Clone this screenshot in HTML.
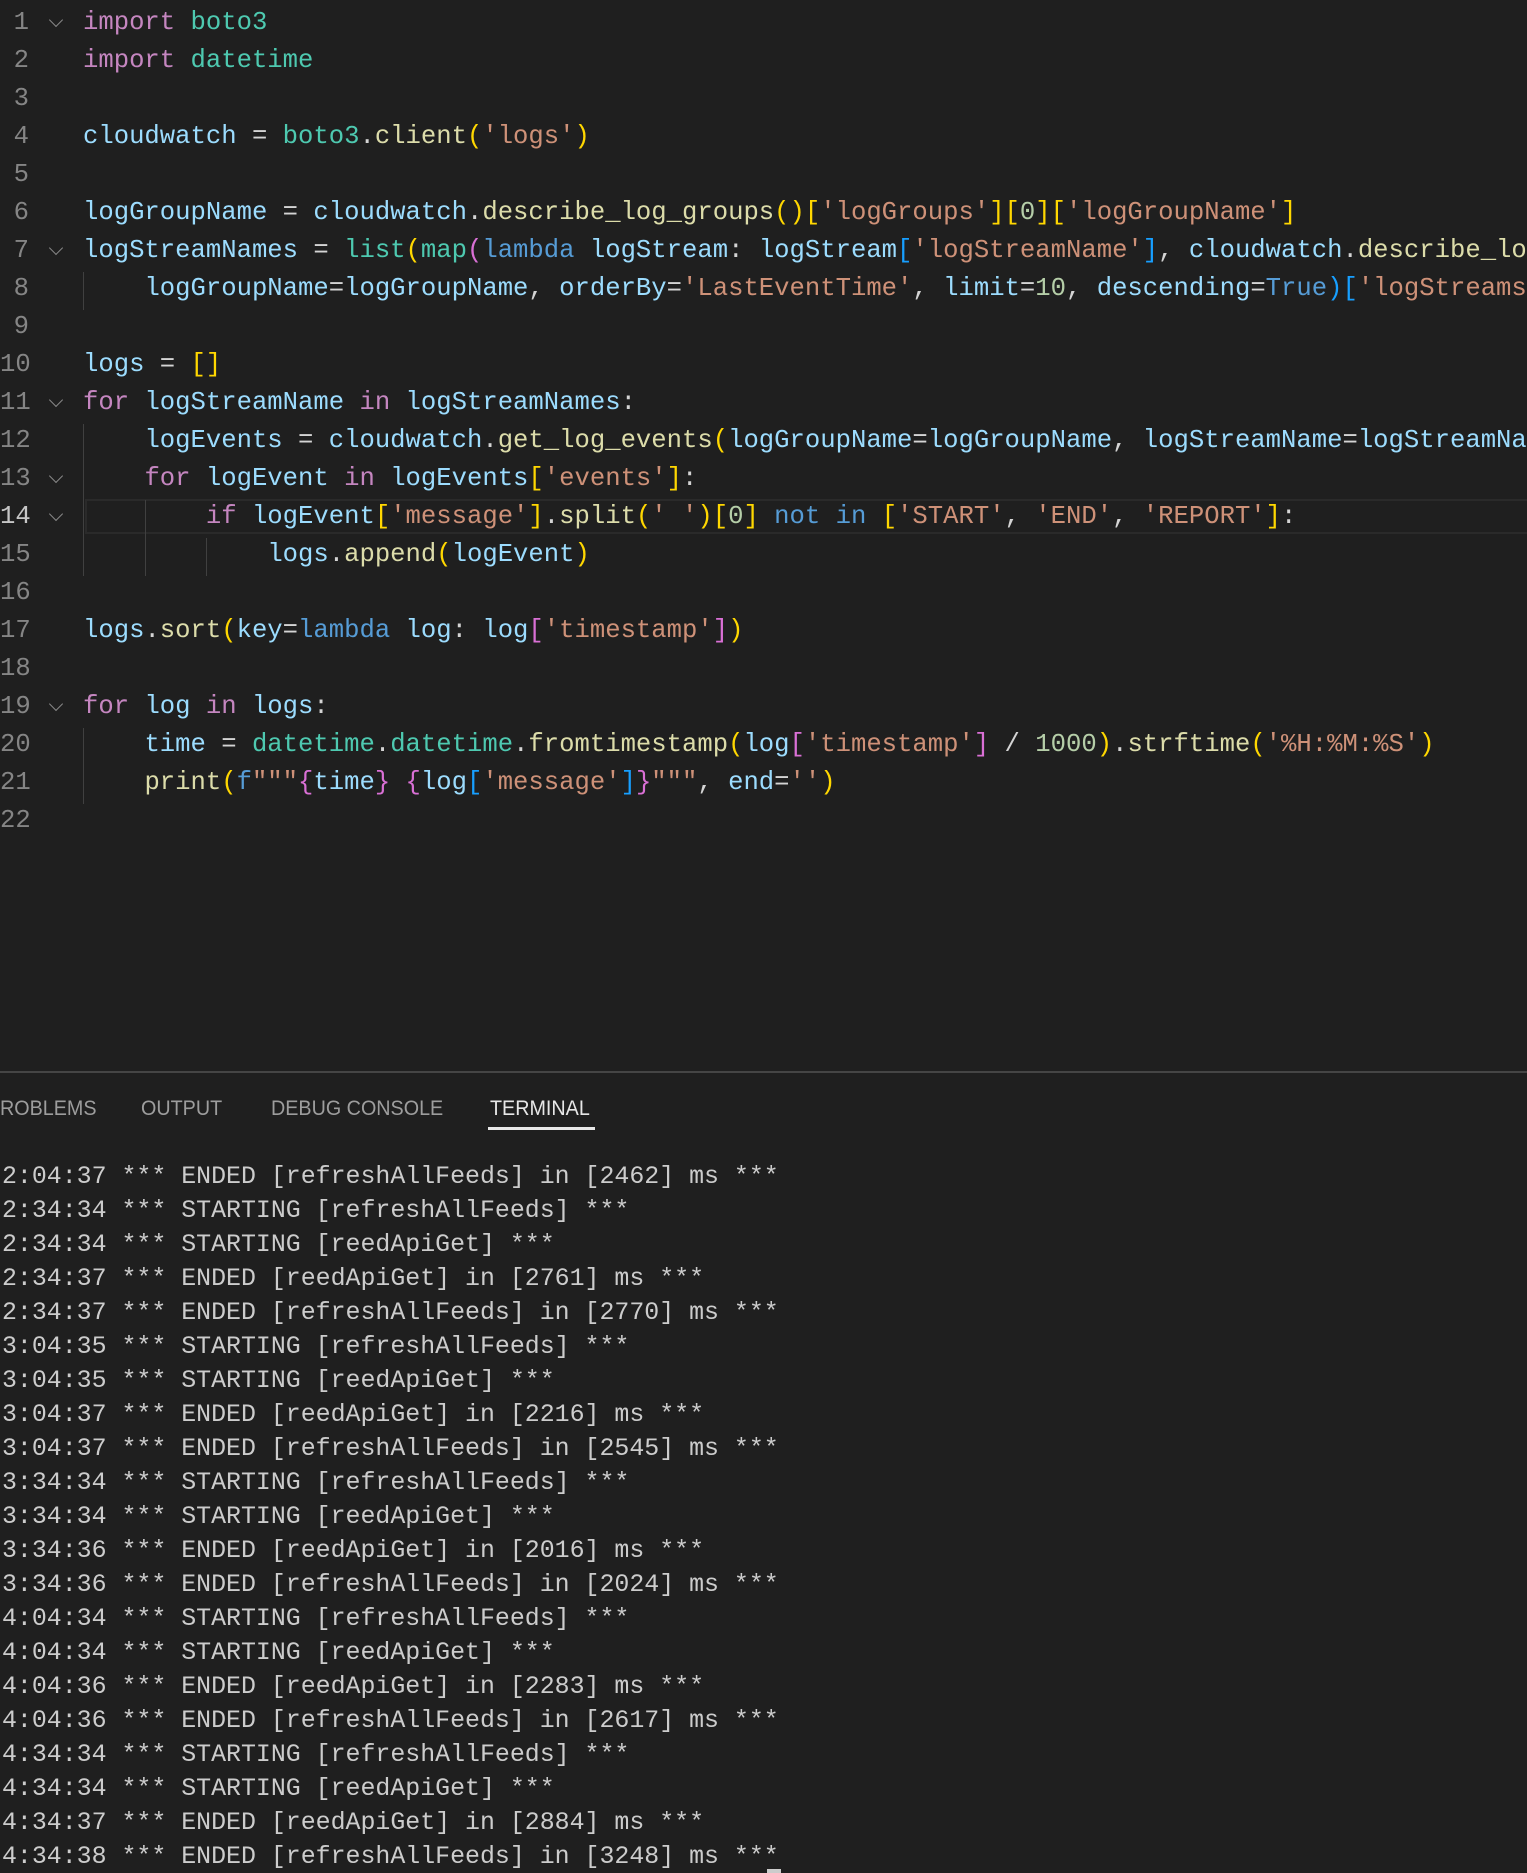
<!DOCTYPE html>
<html><head><meta charset="utf-8"><style>
html,body{margin:0;padding:0;background:#1f1f1f;width:1527px;height:1873px;overflow:hidden;position:relative}
#wrap{position:absolute;left:0;top:0;width:1527px;height:1873px;overflow:hidden}
.ln{position:absolute;left:0;width:29px;text-align:right;font:25.6px/38px "Liberation Mono",monospace;color:#858585;white-space:pre}
.c{position:absolute;left:83px;right:0;overflow:hidden;font:25.6px/38px "Liberation Mono",monospace;color:#d4d4d4;white-space:pre}
.t{position:absolute;left:2px;font:24.9px/34px "Liberation Mono",monospace;color:#cccccc;white-space:pre}
.k{color:#c586c0}.b{color:#569cd6}.m{color:#4ec9b0}.v{color:#9cdcfe}.f{color:#dcdcaa}.s{color:#ce9178}.n{color:#b5cea8}
.p1{color:#ffd700}.p2{color:#da70d6}.p3{color:#179fff}
.chev{position:absolute;left:51px;width:9px;height:9px;border-right:1.5px solid #888;border-bottom:1.5px solid #888;transform:rotate(45deg)}
.g{position:absolute;width:1px;background:#404040}
.tab{position:absolute;top:1095px;font:21px/28px "Liberation Sans",sans-serif;color:#9d9d9d;transform:scaleX(0.94);transform-origin:left}
</style></head><body><div id="wrap">
<div style="position:absolute;top:499px;width:1442px;height:35px;box-sizing:border-box;border:2px solid #2a2a2a;border-right:none;left:85px"></div>

<div class="ln" style="top:4px">1</div>
<div class="ln" style="top:42px">2</div>
<div class="ln" style="top:80px">3</div>
<div class="ln" style="top:118px">4</div>
<div class="ln" style="top:156px">5</div>
<div class="ln" style="top:194px">6</div>
<div class="ln" style="top:232px">7</div>
<div class="ln" style="top:270px">8</div>
<div class="ln" style="top:308px">9</div>
<div class="ln" style="top:346px">10</div>
<div class="ln" style="top:384px">11</div>
<div class="ln" style="top:422px">12</div>
<div class="ln" style="top:460px">13</div>
<div class="ln" style="top:498px;color:#c6c6c6">14</div>
<div class="ln" style="top:536px">15</div>
<div class="ln" style="top:574px">16</div>
<div class="ln" style="top:612px">17</div>
<div class="ln" style="top:650px">18</div>
<div class="ln" style="top:688px">19</div>
<div class="ln" style="top:726px">20</div>
<div class="ln" style="top:764px">21</div>
<div class="ln" style="top:802px">22</div>

<div class="chev" style="top:15px"></div>
<div class="chev" style="top:243px"></div>
<div class="chev" style="top:395px"></div>
<div class="chev" style="top:471px"></div>
<div class="chev" style="top:509px"></div>
<div class="chev" style="top:699px"></div>

<div class="g" style="left:83px;top:272px;height:38px"></div>
<div class="g" style="left:83px;top:424px;height:152px"></div>
<div class="g" style="left:145px;top:500px;height:76px"></div>
<div class="g" style="left:206px;top:538px;height:38px"></div>
<div class="g" style="left:83px;top:728px;height:76px"></div>

<div class="c" style="top:4px"><span class="k">import</span> <span class="m">boto3</span></div>
<div class="c" style="top:42px"><span class="k">import</span> <span class="m">datetime</span></div>
<div class="c" style="top:118px"><span class="v">cloudwatch</span> = <span class="m">boto3</span>.<span class="f">client</span><span class="p1">(</span><span class="s">'logs'</span><span class="p1">)</span></div>
<div class="c" style="top:194px"><span class="v">logGroupName</span> = <span class="v">cloudwatch</span>.<span class="f">describe_log_groups</span><span class="p1">()[</span><span class="s">'logGroups'</span><span class="p1">][</span><span class="n">0</span><span class="p1">][</span><span class="s">'logGroupName'</span><span class="p1">]</span></div>
<div class="c" style="top:232px"><span class="v">logStreamNames</span> = <span class="m">list</span><span class="p1">(</span><span class="m">map</span><span class="p2">(</span><span class="b">lambda</span> <span class="v">logStream</span>: <span class="v">logStream</span><span class="p3">[</span><span class="s">'logStreamName'</span><span class="p3">]</span>, <span class="v">cloudwatch</span>.<span class="f">describe_log_streams</span><span class="p3">(</span></div>
<div class="c" style="top:270px">    <span class="v">logGroupName</span>=<span class="v">logGroupName</span>, <span class="v">orderBy</span>=<span class="s">'LastEventTime'</span>, <span class="v">limit</span>=<span class="n">10</span>, <span class="v">descending</span>=<span class="b">True</span><span class="p3">)[</span><span class="s">'logStreams'</span><span class="p3">]</span></div>
<div class="c" style="top:346px"><span class="v">logs</span> = <span class="p1">[]</span></div>
<div class="c" style="top:384px"><span class="k">for</span> <span class="v">logStreamName</span> <span class="k">in</span> <span class="v">logStreamNames</span>:</div>
<div class="c" style="top:422px">    <span class="v">logEvents</span> = <span class="v">cloudwatch</span>.<span class="f">get_log_events</span><span class="p1">(</span><span class="v">logGroupName</span>=<span class="v">logGroupName</span>, <span class="v">logStreamName</span>=<span class="v">logStreamName</span><span class="p1">)</span></div>
<div class="c" style="top:460px">    <span class="k">for</span> <span class="v">logEvent</span> <span class="k">in</span> <span class="v">logEvents</span><span class="p1">[</span><span class="s">'events'</span><span class="p1">]</span>:</div>
<div class="c" style="top:498px">        <span class="k">if</span> <span class="v">logEvent</span><span class="p1">[</span><span class="s">'message'</span><span class="p1">]</span>.<span class="f">split</span><span class="p1">(</span><span class="s">' '</span><span class="p1">)[</span><span class="n">0</span><span class="p1">]</span> <span class="b">not</span> <span class="b">in</span> <span class="p1">[</span><span class="s">'START'</span>, <span class="s">'END'</span>, <span class="s">'REPORT'</span><span class="p1">]</span>:</div>
<div class="c" style="top:536px">            <span class="v">logs</span>.<span class="f">append</span><span class="p1">(</span><span class="v">logEvent</span><span class="p1">)</span></div>
<div class="c" style="top:612px"><span class="v">logs</span>.<span class="f">sort</span><span class="p1">(</span><span class="v">key</span>=<span class="b">lambda</span> <span class="v">log</span>: <span class="v">log</span><span class="p2">[</span><span class="s">'timestamp'</span><span class="p2">]</span><span class="p1">)</span></div>
<div class="c" style="top:688px"><span class="k">for</span> <span class="v">log</span> <span class="k">in</span> <span class="v">logs</span>:</div>
<div class="c" style="top:726px">    <span class="v">time</span> = <span class="m">datetime</span>.<span class="m">datetime</span>.<span class="f">fromtimestamp</span><span class="p1">(</span><span class="v">log</span><span class="p2">[</span><span class="s">'timestamp'</span><span class="p2">]</span> / <span class="n">1000</span><span class="p1">)</span>.<span class="f">strftime</span><span class="p1">(</span><span class="s">'%H:%M:%S'</span><span class="p1">)</span></div>
<div class="c" style="top:764px">    <span class="f">print</span><span class="p1">(</span><span class="b">f</span><span class="s">"""</span><span class="p2">{</span><span class="v">time</span><span class="p2">}</span> <span class="p2">{</span><span class="v">log</span><span class="p3">[</span><span class="s">'message'</span><span class="p3">]</span><span class="p2">}</span><span class="s">"""</span>, <span class="v">end</span>=<span class="s">''</span><span class="p1">)</span></div>

<div style="position:absolute;left:0;top:1071px;width:1527px;height:2px;background:#454545"></div>
<div class="tab" style="left:0">ROBLEMS</div>
<div class="tab" style="left:141px">OUTPUT</div>
<div class="tab" style="left:271px">DEBUG CONSOLE</div>
<div class="tab" style="left:490px;color:#e7e7e7">TERMINAL</div>
<div style="position:absolute;left:488px;top:1127px;width:107px;height:3px;background:#e7e7e7"></div>

<div class="t" style="top:1160px">2:04:37 *** ENDED [refreshAllFeeds] in [2462] ms ***</div>
<div class="t" style="top:1194px">2:34:34 *** STARTING [refreshAllFeeds] ***</div>
<div class="t" style="top:1228px">2:34:34 *** STARTING [reedApiGet] ***</div>
<div class="t" style="top:1262px">2:34:37 *** ENDED [reedApiGet] in [2761] ms ***</div>
<div class="t" style="top:1296px">2:34:37 *** ENDED [refreshAllFeeds] in [2770] ms ***</div>
<div class="t" style="top:1330px">3:04:35 *** STARTING [refreshAllFeeds] ***</div>
<div class="t" style="top:1364px">3:04:35 *** STARTING [reedApiGet] ***</div>
<div class="t" style="top:1398px">3:04:37 *** ENDED [reedApiGet] in [2216] ms ***</div>
<div class="t" style="top:1432px">3:04:37 *** ENDED [refreshAllFeeds] in [2545] ms ***</div>
<div class="t" style="top:1466px">3:34:34 *** STARTING [refreshAllFeeds] ***</div>
<div class="t" style="top:1500px">3:34:34 *** STARTING [reedApiGet] ***</div>
<div class="t" style="top:1534px">3:34:36 *** ENDED [reedApiGet] in [2016] ms ***</div>
<div class="t" style="top:1568px">3:34:36 *** ENDED [refreshAllFeeds] in [2024] ms ***</div>
<div class="t" style="top:1602px">4:04:34 *** STARTING [refreshAllFeeds] ***</div>
<div class="t" style="top:1636px">4:04:34 *** STARTING [reedApiGet] ***</div>
<div class="t" style="top:1670px">4:04:36 *** ENDED [reedApiGet] in [2283] ms ***</div>
<div class="t" style="top:1704px">4:04:36 *** ENDED [refreshAllFeeds] in [2617] ms ***</div>
<div class="t" style="top:1738px">4:34:34 *** STARTING [refreshAllFeeds] ***</div>
<div class="t" style="top:1772px">4:34:34 *** STARTING [reedApiGet] ***</div>
<div class="t" style="top:1806px">4:34:37 *** ENDED [reedApiGet] in [2884] ms ***</div>
<div class="t" style="top:1840px">4:34:38 *** ENDED [refreshAllFeeds] in [3248] ms ***</div>
<div style="position:absolute;left:767px;top:1869px;width:14px;height:4px;background:#cccccc"></div>
</div></body></html>
